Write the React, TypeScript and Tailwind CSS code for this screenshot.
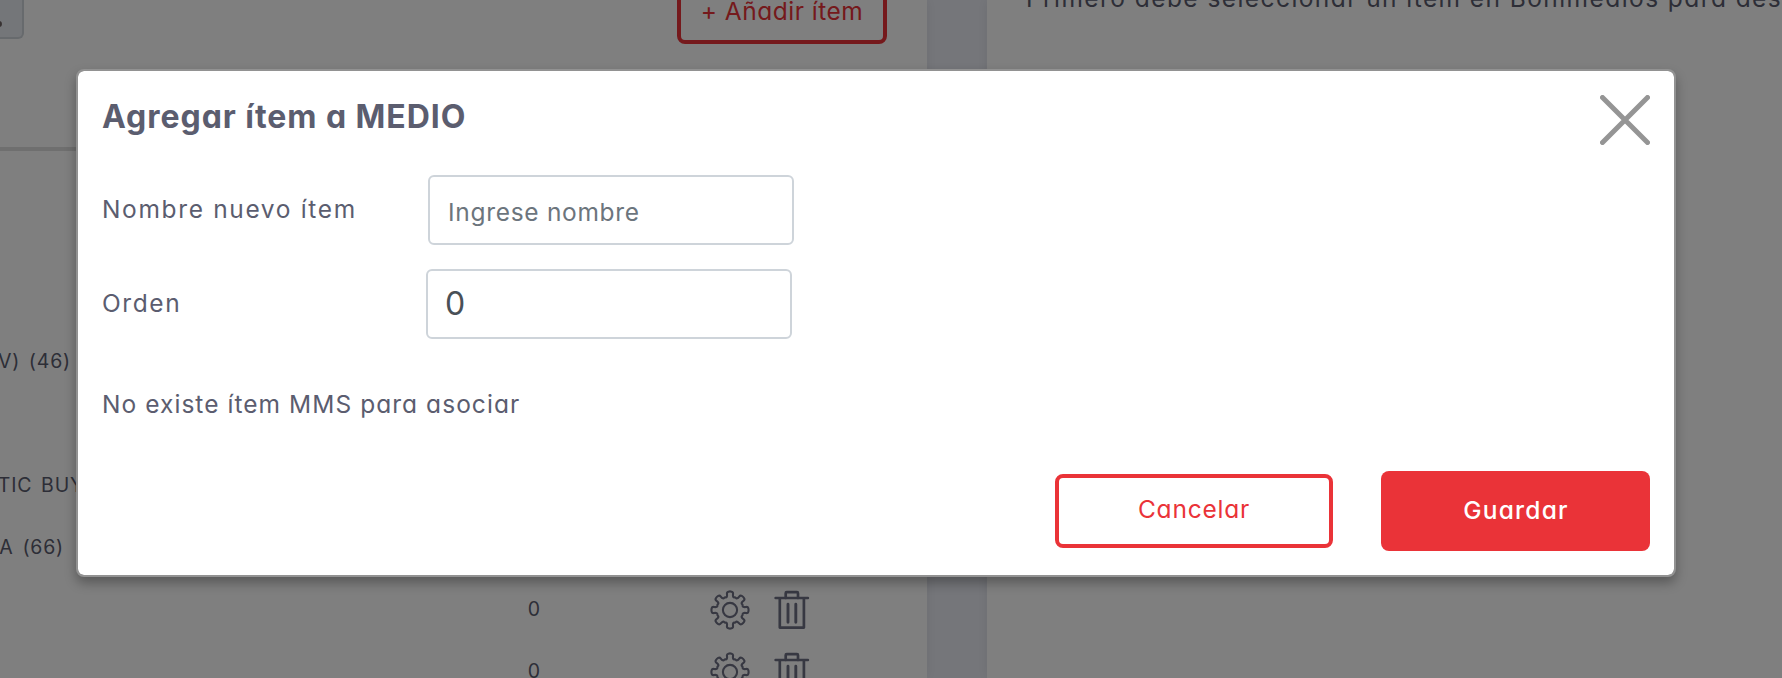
const GEAR_PATH = (() => {
  const pts: [number, number][] = []
  const profile: [number, number][] = [
    [-22.5, 13.8],
    [-16, 13],
    [-11, 14.4],
    [-10.5, 18.2],
    [0, 18.8],
    [10.5, 18.2],
    [11, 14.4],
    [16, 13],
  ]
  for (let tooth = 0; tooth < 8; tooth++) {
    for (const [deg, r] of profile) {
      const a = ((tooth * 45 + deg - 90) * Math.PI) / 180
      pts.push([20 + r * Math.cos(a), 20 + r * Math.sin(a)])
    }
  }
  const mid = (i: number) => {
    const p = pts[i % pts.length]
    const q = pts[(i + 1) % pts.length]
    return `${((p[0] + q[0]) / 2).toFixed(2)} ${((p[1] + q[1]) / 2).toFixed(2)}`
  }
  let d = `M${mid(pts.length - 1)}`
  pts.forEach((p, i) => {
    d += `Q${p[0].toFixed(2)} ${p[1].toFixed(2)} ${mid(i)}`
  })
  return d + 'Z'
})()

function GearIcon() {
  return (
    <svg width="40" height="40" viewBox="0 0 40 40" fill="none" stroke="currentColor" strokeWidth="2.1">
      <path d={GEAR_PATH} />
      <circle cx="20" cy="20" r="7.1" />
    </svg>
  )
}

function TrashIcon() {
  return (
    <svg width="36" height="40" viewBox="0 0 36 40" fill="none" stroke="currentColor" strokeLinecap="round" strokeLinejoin="round">
      <path d="M1.5 8H34" strokeWidth="2.4" />
      <path d="M11.7 8V3.2a1 1 0 0 1 1-1H23a1 1 0 0 1 1 1V8" strokeWidth="2.7" />
      <path d="M5.8 9V37.6H29.9V9" strokeWidth="2.7" />
      <path d="M14 14.2V32.2M21.8 14.2V32.2" strokeWidth="2.9" />
    </svg>
  )
}

function CloseIcon() {
  return (
    <svg width="50" height="50" viewBox="0 0 50 50" fill="none" stroke="#959595" strokeWidth="5" strokeLinecap="round">
      <path d="M2.5 2.5L47.5 47.5M47.5 2.5L2.5 47.5" />
    </svg>
  )
}

function ItemRow({ label, width }: { label: string; width: string }) {
  return (
    <div className="flex h-[62px] items-center text-[19.5px] text-[#5b5d6f]">
      <div className={`flex shrink-0 justify-end tracking-[0.8px] [word-spacing:2.5px] whitespace-nowrap ${width}`}>{label}</div>
      <div className="flex flex-1 items-center justify-end pr-[117px]">
        <span className="mr-[170px]">0</span>
        <span className="mr-[24px] text-[#6f7185]"><GearIcon /></span>
        <span className="text-[#6f7185]"><TrashIcon /></span>
      </div>
    </div>
  )
}

function BackgroundPage() {
  return (
    <div className="flex h-[678px] w-[1782px] gap-[60px] overflow-hidden bg-[#ebedf5]">
      <section className="w-[927px] shrink-0 bg-white shadow-[0_0_12px_rgba(0,0,0,0.08)]">
        <div className="flex h-[147px] items-start justify-between pr-[40px]">
          <div className="flex h-[39px] w-6 items-start rounded-br-[6px] border-r-2 border-b-2 border-[#ced4da] bg-[#e9ecf3]">
            <span className="mt-[21px] -ml-[4px] size-[6px] rounded-full bg-[#6f6464]" />
          </div>
          <button className="-mt-[26px] flex h-[70px] w-[210px] items-center justify-center rounded-lg border-4 border-[#ea3338] pt-[5px] text-[24.5px] tracking-[0.5px] whitespace-nowrap text-[#ea3338]">
            + Añadir ítem
          </button>
        </div>
        <div className="h-1 bg-[#dedede]" />
        <div className="mt-[180px]">
          <ItemRow label="V) (46)" width="w-[71px]" />
          <ItemRow label="" width="w-[71px]" />
          <ItemRow label="ATIC BUY" width="w-[84px]" />
          <ItemRow label="A (66)" width="w-[64px]" />
          <ItemRow label="" width="w-[71px]" />
          <ItemRow label="" width="w-[71px]" />
        </div>
      </section>
      <section className="flex-1 overflow-hidden bg-white pl-[39px] shadow-[0_0_12px_rgba(0,0,0,0.08)]">
        <p className="-mt-[22px] text-[24.5px] leading-10 tracking-[1.43px] whitespace-nowrap text-[#5b5d6f]">
          Primero debe seleccionar un ítem en Bonimedios para desplegar
        </p>
      </section>
    </div>
  )
}

function Modal() {
  return (
    <div className="flex h-[508px] w-[1600px] flex-col rounded-lg border-2 border-[#929292] bg-white bg-clip-padding pt-6 pr-6 pl-[23px] text-[24.5px] text-[#5b5d6f] shadow-[0_6px_12px_rgba(0,0,0,0.3)]">
      <div className="flex h-[50px] items-start justify-between">
        <h2 className="pl-px text-[32px] leading-[44px] font-bold tracking-[0.95px]">Agregar ítem a MEDIO</h2>
        <button aria-label="Cerrar"><CloseIcon /></button>
      </div>
      <div className="mt-[30px] flex h-[70px] items-center">
        <label className="w-[327px] pb-px pl-px tracking-[1.65px]">Nombre nuevo ítem</label>
        <input
          className="h-[70px] w-[366px] rounded-[6px] border-2 border-[#ced4da] pt-[4px] pl-[18px] tracking-[0.7px] text-[#495057] outline-none placeholder:text-[#6c757d] placeholder:opacity-100"
          placeholder="Ingrese nombre"
        />
      </div>
      <div className="mt-6 flex h-[70px] items-center">
        <label className="w-[325px] pb-[2px] pl-px tracking-[1.6px]">Orden</label>
        <input
          className="h-[70px] w-[366px] rounded-[6px] border-2 border-[#ced4da] pb-[2px] pl-[17px] text-[32px] text-[#495057] outline-none"
          defaultValue="0"
        />
      </div>
      <p className="mt-[45px] pl-px leading-10 tracking-[1.05px]">No existe ítem MMS para asociar</p>
      <div className="mt-[47px] flex h-20 items-center justify-end gap-12">
        <button className="h-[74px] w-[278px] rounded-lg border-4 border-[#ea3338] pb-[3px] tracking-[0.8px] text-[#ea3338]">
          Cancelar
        </button>
        <button className="h-20 w-[269px] rounded-lg bg-[#ea3338] pb-px pl-px font-medium tracking-[1.2px] text-white">
          Guardar
        </button>
      </div>
    </div>
  )
}

export default function App() {
  return (
    <div className="relative h-[678px] w-[1782px] overflow-hidden font-['Inter',sans-serif] [font-feature-settings:'cv11']">
      <BackgroundPage />
      <div className="absolute inset-0 bg-black/50 pt-[69px] pl-[76px]">
        <Modal />
      </div>
    </div>
  )
}
